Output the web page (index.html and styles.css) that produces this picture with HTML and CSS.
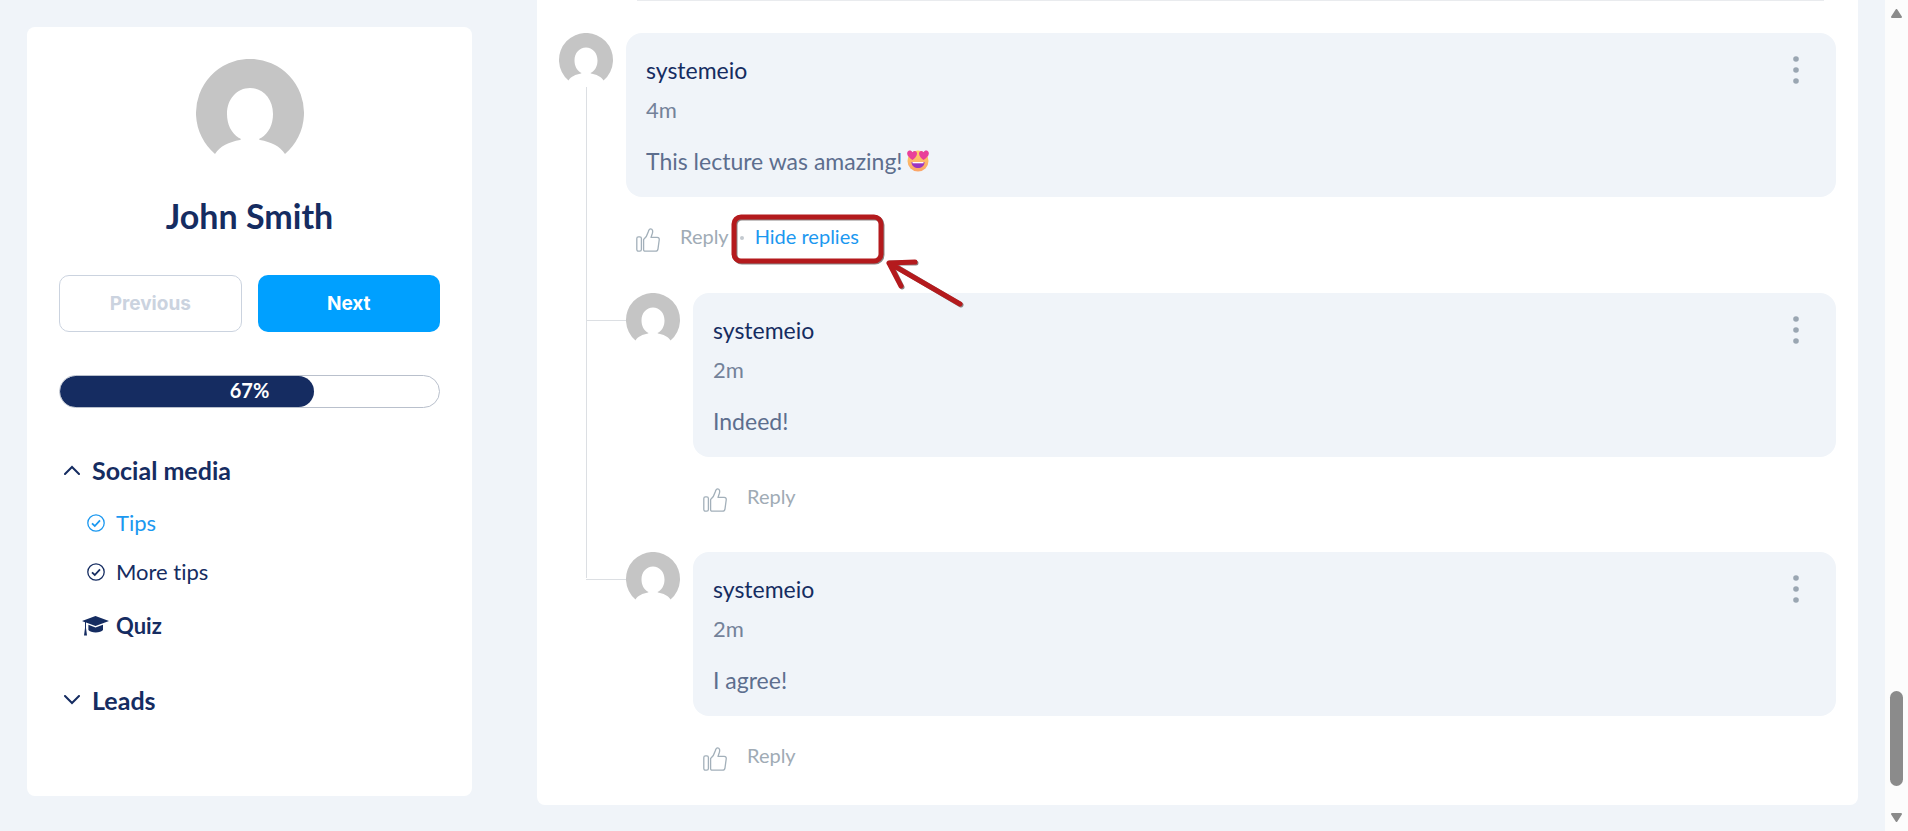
FILE: index.html
```html
<!DOCTYPE html>
<html lang="en">
<head>
   <meta charset="utf-8">
   <meta name="viewport" content="width=device-width, initial-scale=1">
   <title>Social media - Tips</title>
   <link rel="stylesheet" href="styles.css">
</head>
<body>

<!-- shared icons -->
<svg class="sprite" aria-hidden="true">
   <symbol id="i-avatar" viewBox="0 0 108 108">
      <path fill="#c5c5c5" d="M19 95 A54 54 0 1 1 89 95 C84 87 75 83 64 81 Q62 80 65 79 C73 74 77 65 77 55 C77 40 67 29 54 29 C41 29 31 40 31 55 C31 65 35 74 43 79 Q46 80 44 81 C33 83 24 87 19 95Z"/>
   </symbol>
   <symbol id="i-like" viewBox="0 0 24 24">
      <g fill="none" stroke="#a3b0ba" stroke-width="1.3" stroke-linejoin="round">
         <rect x="0.8" y="8.8" width="4.6" height="14.4" rx="1.6"/>
         <path d="M7.6 11.5 C10 9.5 11.4 7 12.2 4 C12.7 1.8 13.3 .8 14.6 .8 C16.6 .8 17 3 16.4 5.2 L15 9.4 H21.2 C22.9 9.4 23.4 10.5 23.2 12 L22 20.8 C21.8 22.4 21 23.2 19.4 23.2 H9.2 C8 23.2 7.6 22.6 7.6 21.6Z"/>
      </g>
   </symbol>
   <symbol id="i-check" viewBox="0 0 18 18">
      <circle cx="9" cy="9" r="8.2" fill="none" stroke="currentColor" stroke-width="1.3"/>
      <path d="M5 9.3 L7.8 12 L13 6.4" fill="none" stroke="currentColor" stroke-width="1.8"/>
   </symbol>
   <symbol id="i-dots" viewBox="0 0 10 28">
      <g fill="#9aa6b2"><circle cx="5" cy="3" r="2.8"/><circle cx="5" cy="14" r="2.8"/><circle cx="5" cy="25" r="2.8"/></g>
   </symbol>
</svg>

<div id="page">
   <aside class="sidebar card">
      <svg class="photo" role="img" aria-label="John Smith"><use href="#i-avatar"/></svg>
      <h1>John Smith</h1>

      <div class="steps">
         <button type="button" class="btn btn-prev" disabled>Previous</button>
         <button type="button" class="btn btn-next">Next</button>
      </div>

      <div class="progress" role="progressbar" aria-label="Course progress" aria-valuenow="67" aria-valuemin="0" aria-valuemax="100">
         <div class="bar" style="width: 67%"></div>
         <span>67%</span>
      </div>

      <nav>
         <button type="button" class="module" aria-expanded="true">
            <svg viewBox="0 0 16 10"><path d="M1 9 L8 2 L15 9"/></svg>Social media
         </button>
         <ul>
            <li><a href="#" class="active"><svg class="check"><use href="#i-check"/></svg>Tips</a></li>
            <li><a href="#"><svg class="check"><use href="#i-check"/></svg>More tips</a></li>
            <li class="quiz"><a href="#">
               <svg class="cap" viewBox="0 0 27 20">
                  <path d="M13.5 0 L27 5 L13.5 10 L4 6.5 V12 L5 19.5 H2 L3 12 V6.2 L0 5Z"/>
                  <path d="M6.4 8.8 L13.5 11.6 L21 8.8 V14 C19 17.2 8.4 17.2 6.4 14Z"/>
               </svg>Quiz</a></li>
         </ul>
         <button type="button" class="module" aria-expanded="false">
            <svg viewBox="0 0 16 10"><path d="M1 1 L8 8 L15 1"/></svg>Leads
         </button>
      </nav>
   </aside>

   <main class="comments card">
      <hr>
      <article class="comment">
         <div class="rail">
            <svg class="avatar" aria-hidden="true"><use href="#i-avatar"/></svg>
            <div class="line"></div>
         </div>
         <div class="content">
            <div class="bubble">
               <div class="head">
                  <strong>systemeio</strong>
                  <button type="button" class="menu" aria-label="Comment menu"><svg><use href="#i-dots"/></svg></button>
               </div>
               <time>4m</time>
               <p>This lecture was amazing!<svg class="emoji" viewBox="0 0 22 22" role="img" aria-label="heart eyes">
                  <defs><linearGradient id="face" x1="0" y1="0" x2="0" y2="1"><stop offset="0" stop-color="#ffcf68"/><stop offset="1" stop-color="#fba468"/></linearGradient></defs>
                  <circle cx="11" cy="11" r="10.5" fill="url(#face)"/>
                  <path fill="#e9409a" d="M5.5 10 C2 7.5 -.5 5 .3 2.5 C1.2 0 4.3 0 5.5 2.3 C7.3 .2 10 1 10 3.7 C10 6 7.5 8.4 5.5 10Z"/>
                  <path fill="#e9409a" d="M16.5 10 C20 7.5 22.5 5 21.7 2.5 C20.8 0 17.7 0 16.5 2.3 C14.7 .2 12 1 12 3.7 C12 6 14.5 8.4 16.5 10Z"/>
                  <path fill="#9b35c0" d="M4.5 12 H17.5 C17.5 20 4.5 20 4.5 12Z"/>
                  <path fill="#fff" d="M5.5 12 H16.5 V13.3 H5.5Z"/>
               </svg></p>
            </div>
            <div class="actions">
               <button type="button" class="like" aria-label="Like"><svg><use href="#i-like"/></svg></button>
               <button type="button">Reply</button>
               <i class="sep"></i>
               <button type="button" class="toggle">Hide replies</button>
               <!-- highlight with the arrow -->
               <svg class="mark" viewBox="0 0 240 98" aria-hidden="true">
                  <g class="shade"><rect x="5" y="5" width="147" height="44" rx="7"/><path d="M231 92 L160 50 H186 M160 50 L172 74"/></g>
                  <g class="ink"><rect x="4" y="4" width="147" height="44" rx="7"/><path d="M230 91 L159 50 L185 49 M159 50 L171 73"/></g>
               </svg>
            </div>

            <div class="replies">
               <article class="reply">
                  <svg class="avatar" aria-hidden="true"><use href="#i-avatar"/></svg>
                  <div class="content">
                     <div class="bubble">
                        <div class="head">
                           <strong>systemeio</strong>
                           <button type="button" class="menu" aria-label="Comment menu"><svg><use href="#i-dots"/></svg></button>
                        </div>
                        <time>2m</time>
                        <p>Indeed!</p>
                     </div>
                     <div class="actions">
                        <button type="button" class="like" aria-label="Like"><svg><use href="#i-like"/></svg></button>
                        <button type="button">Reply</button>
                     </div>
                  </div>
               </article>
               <article class="reply">
                  <svg class="avatar" aria-hidden="true"><use href="#i-avatar"/></svg>
                  <div class="content">
                     <div class="bubble">
                        <div class="head">
                           <strong>systemeio</strong>
                           <button type="button" class="menu" aria-label="Comment menu"><svg><use href="#i-dots"/></svg></button>
                        </div>
                        <time>2m</time>
                        <p>I agree!</p>
                     </div>
                     <div class="actions">
                        <button type="button" class="like" aria-label="Like"><svg><use href="#i-like"/></svg></button>
                        <button type="button">Reply</button>
                     </div>
                  </div>
               </article>
            </div>
         </div>
      </article>
   </main>

   <div class="scrollbar" aria-hidden="true">
      <svg viewBox="0 0 11 9"><path d="M5.5 1 L10 8 H1Z"/></svg>
      <div class="thumb"></div>
      <svg viewBox="0 0 11 9"><path d="M5.5 8 L10 1 H1Z"/></svg>
   </div>
</div>

</body>
</html>
```

FILE: styles.css
```css
* { margin: 0; padding: 0; box-sizing: border-box; }
body { background: #f0f4f9; color: #152c61; font-family: Lato, "Open Sans", sans-serif; font-size: 22px; line-height: 28px; font-variant-ligatures: none; }
button { background: none; border: 0; font: inherit; color: inherit; cursor: pointer; }
a { color: inherit; text-decoration: none; }
ul { list-style: none; }
svg { display: block; flex: none; }

.sprite { position: absolute; width: 0; height: 0; }

#page { display: flex; align-items: flex-start; min-height: 100vh; padding-left: 27px; }
.card { background: #fff; border-radius: 8px; }

/* sidebar */
.sidebar { flex: 0 0 445px; margin: 27px 65px 0 0; padding: 32px 32px 80px; }
.photo { width: 108px; height: 108px; margin: 0 auto 29px; }
h1 { font-size: 34px; line-height: 40px; text-align: center; margin-bottom: 39px; }

.steps { display: grid; grid-template-columns: 1fr 1fr; gap: 16px; margin-bottom: 43px; }
.btn { height: 57px; border-radius: 10px; font-family: Inter, sans-serif; font-size: 19px; font-weight: 700; }
.btn-prev { border: 1px solid #cbd3df; color: #cbd3df; }
.btn-next { background: #00a0ff; color: #fff; }

.progress { display: grid; height: 33px; border: 1px solid #b9c0cc; border-radius: 17px; margin-bottom: 46px; overflow: hidden; }
.progress .bar { grid-area: 1 / 1; background: #152c61; border-radius: 16px; }
.progress span { grid-area: 1 / 1; text-align: center; color: #fff; font-size: 20px; font-weight: 700; }

.module { display: flex; align-items: center; gap: 12px; padding-left: 5px; font-size: 25px; font-weight: 700; line-height: 32px; }
.module svg { width: 16px; height: 10px; fill: none; stroke: currentColor; stroke-width: 2; stroke-linecap: round; }
nav ul { display: flex; flex-direction: column; gap: 21px; margin: 23px 0 44px; padding-left: 23px; }
nav a { display: flex; align-items: center; gap: 7px; }
nav .active { color: #1b98f0; }
.check { width: 18px; height: 18px; margin: 0 4px 0 5px; }
.cap { width: 27px; height: 20px; fill: currentColor; }
.quiz { margin-top: 5px; font-weight: 700; }

/* comments */
.comments { flex: 1; min-width: 0; padding: 0 22px 34px; border-radius: 0 0 8px 8px; }
hr { border: 0; height: 1px; background: #e9ebee; margin: 0 12px 32px 78px; }
.comment, .reply { display: flex; gap: 13px; }
.content { flex: 1; min-width: 0; }
.avatar { width: 54px; height: 54px; }
.rail { display: flex; flex-direction: column; align-items: center; }
.rail .line { flex: 1; width: 1px; background: #dcdfe3; margin-bottom: 193px; }

.bubble { background: #f0f4f9; border-radius: 16px; padding: 23px 35px 22px 20px; }
.head { display: flex; justify-content: space-between; }
.head strong { font-size: 23px; font-weight: 400; }
.menu svg { width: 10px; height: 28px; }
time { display: block; margin: 12px 0 23px; color: #748299; }
.bubble p { display: flex; align-items: center; gap: 4px; color: #5d6e8e; font-size: 23px; }
.emoji { width: 22px; height: 22px; }

.actions { position: relative; display: flex; align-items: flex-start; padding: 27px 0 0 10px; color: #a0abb5; font-size: 20px; }
.actions button { line-height: 24px; }
.actions .like { margin: 4px 20px 0 0; }
.like svg { width: 24px; height: 24px; }
.sep { width: 4px; height: 4px; border-radius: 50%; background: #c3c9cf; margin: 12px 11px 0; }
.actions .toggle { color: #1b98f0; }

.mark { position: absolute; z-index: 1; left: 104px; top: 16px; width: 240px; height: 98px; pointer-events: none; }
.mark g { fill: none; stroke-width: 5; stroke-linecap: round; stroke-linejoin: round; }
.mark .shade { stroke: #8b8585; }
.mark .ink { stroke: #b41a1d; }

.replies { display: flex; flex-direction: column; gap: 40px; margin-top: 41px; }
.reply { position: relative; }
.reply::before { content: ""; position: absolute; left: -40px; top: 27px; width: 40px; height: 1px; background: #dcdfe3; }

/* window scrollbar */
.scrollbar { flex: 0 0 23px; align-self: stretch; display: flex; flex-direction: column; align-items: center; background: #fcfcfc; margin-left: 27px; padding: 9px 0; }
.scrollbar svg { width: 11px; height: 9px; fill: #8b8b8b; stroke: #8b8b8b; stroke-width: 2; stroke-linejoin: round; }
.scrollbar .thumb { width: 13px; height: 95px; border-radius: 7px; background: #8b8b8b; margin: auto 0 27px; }
```
